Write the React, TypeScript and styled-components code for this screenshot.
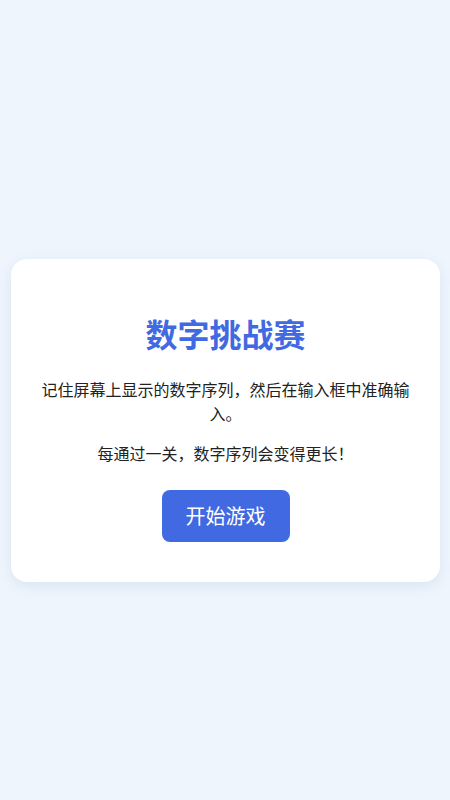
import { FC } from 'react';
import styled, { createGlobalStyle } from 'styled-components';

const GlobalStyle = createGlobalStyle`
  * {
    box-sizing: border-box;
  }

  body {
    margin: 0;
    background-color: #eef5fd;
    font-family: 'Noto Sans CJK SC', 'Noto Sans', sans-serif;
  }
`;

const App: FC = () => {
  return (
    <>
      <GlobalStyle />
      <Page>
        <Card>
          <Title>数字挑战赛</Title>
          <Text>记住屏幕上显示的数字序列，然后在输入框中准确输入。</Text>
          <Text $gap={16}>每通过一关，数字序列会变得更长！</Text>
          <StartButton>开始游戏</StartButton>
        </Card>
      </Page>
    </>
  );
};

export default App;

const Page = styled.div`
  display: flex;
  flex-direction: column;
  justify-content: center;

  min-height: 800px;
  padding: 40px 10px 0 11px;
`;

const Card = styled.div`
  display: flex;
  flex-direction: column;
  align-items: center;

  padding: 30px 30px 40px;
  border-radius: 16px;
  background-color: #ffffff;
  box-shadow: 0 4px 14px rgba(80, 110, 160, 0.12);
`;

const Title = styled.h1`
  margin: 20px 0 0;
  font-size: 32px;
  line-height: 48px;
  font-weight: 700;
  color: #4169e1;
`;

const Text = styled.p<{ $gap?: number }>`
  margin: ${({ $gap }) => $gap ?? 20}px 0 0;
  font-size: 16px;
  line-height: 24px;
  color: #222222;
  text-align: center;
`;

const StartButton = styled.button`
  margin-top: 25px;
  padding: 12px 24px;
  border: none;
  border-radius: 8px;
  background-color: #4169e1;
  color: #ffffff;
  font-family: inherit;
  font-size: 20px;
  line-height: 28px;
  cursor: pointer;
`;
